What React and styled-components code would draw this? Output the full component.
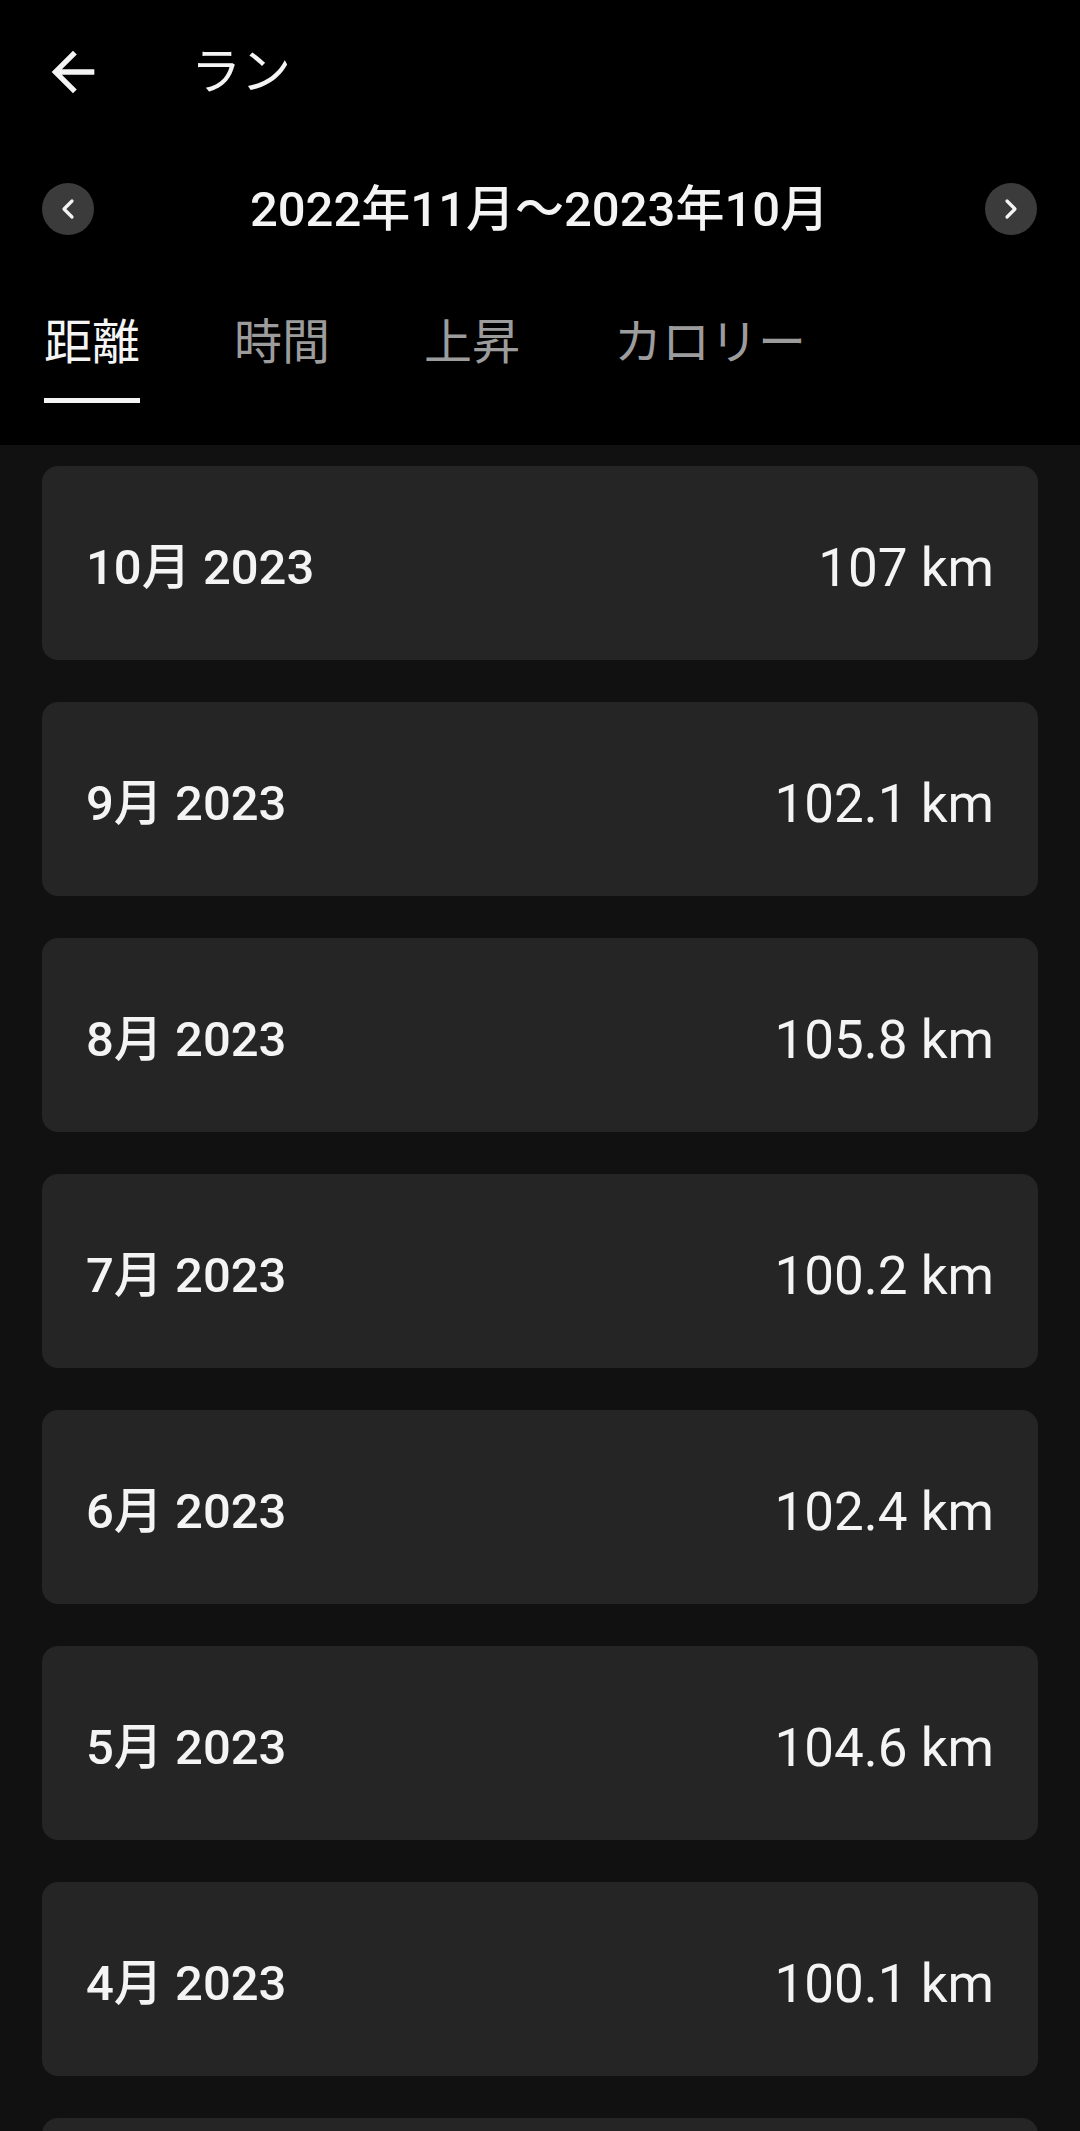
import React, { useState } from 'react'
import styled, { createGlobalStyle } from 'styled-components'

const GlobalStyle = createGlobalStyle`
    html, body {
        margin: 0;
        padding: 0;
        background: #111111;
    }
    body {
        font-family: Roboto, "Noto Sans CJK JP", sans-serif;
        color: #f4f4f4;
        -webkit-font-smoothing: antialiased;
    }
    * {
        box-sizing: border-box;
    }
`

const tabs = ['距離', '時間', '上昇', 'カロリー']

const months = [
    { label: '10月 2023', value: '107 km' },
    { label: '9月 2023', value: '102.1 km' },
    { label: '8月 2023', value: '105.8 km' },
    { label: '7月 2023', value: '100.2 km' },
    { label: '6月 2023', value: '102.4 km' },
    { label: '5月 2023', value: '104.6 km' },
    { label: '4月 2023', value: '100.1 km' },
    { label: '3月 2023', value: '101.3 km' },
]

export default function App() {
    const [active, setActive] = useState(0)

    return (
        <>
            <GlobalStyle />
            <Page>
                <Header>
                    <TopBar>
                        <IconButton aria-label="back">
                            <svg width="64" height="64" viewBox="0 0 24 24">
                                <path fill="#f4f4f4" d="M20 11H7.83l5.59-5.59L12 4l-8 8 8 8 1.41-1.41L7.83 13H20v-2z" />
                            </svg>
                        </IconButton>
                        <Title>ラン</Title>
                    </TopBar>

                    <DateNav>
                        <RoundButton aria-label="previous">
                            <svg width="20" height="24" viewBox="0 0 20 24">
                                <path d="M14 4 L6 12 L14 20" fill="none" stroke="#f4f4f4" strokeWidth="3.2" strokeLinecap="round" strokeLinejoin="round" />
                            </svg>
                        </RoundButton>
                        <Range>2022年11月～2023年10月</Range>
                        <RoundButton aria-label="next">
                            <svg width="20" height="24" viewBox="0 0 20 24">
                                <path d="M6 4 L14 12 L6 20" fill="none" stroke="#f4f4f4" strokeWidth="3.2" strokeLinecap="round" strokeLinejoin="round" />
                            </svg>
                        </RoundButton>
                    </DateNav>

                    <Tabs>
                        {tabs.map((t, i) => (
                            <Tab key={t} active={i === active} onClick={() => setActive(i)}>
                                <span>{t}</span>
                                <Underline active={i === active} />
                            </Tab>
                        ))}
                    </Tabs>
                </Header>

                <List>
                    {months.map(m => (
                        <Card key={m.label}>
                            <Month>{m.label}</Month>
                            <Value>{m.value}</Value>
                        </Card>
                    ))}
                </List>
            </Page>
        </>
    )
}

const Page = styled.div`
    width: 1080px;
    height: 2131px;
    overflow: hidden;
    background: #111111;
`

const Header = styled.header`
    background: #000;
`

const TopBar = styled.div`
    height: 144px;
    display: flex;
    align-items: center;
    padding-left: 41px;
    gap: 86px;
`

const IconButton = styled.button`
    width: 64px;
    height: 64px;
    padding: 0;
    border: none;
    background: none;
    display: flex;
    align-items: center;
    justify-content: center;
`

const Title = styled.h1`
    margin: 0;
    font-size: 50px;
    font-weight: 400;
    line-height: 1;
    color: #f4f4f4;
`

const DateNav = styled.div`
    height: 130px;
    display: flex;
    align-items: center;
    justify-content: space-between;
    padding: 0 43px 0 42px;
`

const RoundButton = styled.button`
    width: 52px;
    height: 52px;
    border-radius: 50%;
    border: none;
    padding: 0;
    background: #3b3b3b;
    display: flex;
    align-items: center;
    justify-content: center;
`

const Range = styled.div`
    font-size: 49px;
    font-weight: 500;
    line-height: 1;
    color: #f4f4f4;
`

const Tabs = styled.nav`
    display: flex;
    gap: 94px;
    padding: 45px 44px 42px;
`

const Tab = styled.div`
    display: flex;
    flex-direction: column;
    font-size: 48px;
    line-height: 1;
    cursor: pointer;
    color: ${({ active }) => (active ? '#f4f4f4' : '#9c9c9c')};
`

const Underline = styled.div`
    margin-top: 31px;
    height: 5px;
    background: ${({ active }) => (active ? '#f4f4f4' : 'transparent')};
`

const List = styled.main`
    display: flex;
    flex-direction: column;
    gap: 42px;
    padding: 21px 42px 40px;
`

const Card = styled.div`
    flex-shrink: 0;
    height: 194px;
    border-radius: 16px;
    background: #252525;
    display: flex;
    align-items: center;
    justify-content: space-between;
    padding: 10px 44px 0;
`

const Month = styled.span`
    font-size: 49px;
    font-weight: 500;
    line-height: 64px;
    color: #f4f4f4;
`

const Value = styled.span`
    font-size: 53px;
    font-weight: 400;
    line-height: 64px;
    color: #f4f4f4;
`
